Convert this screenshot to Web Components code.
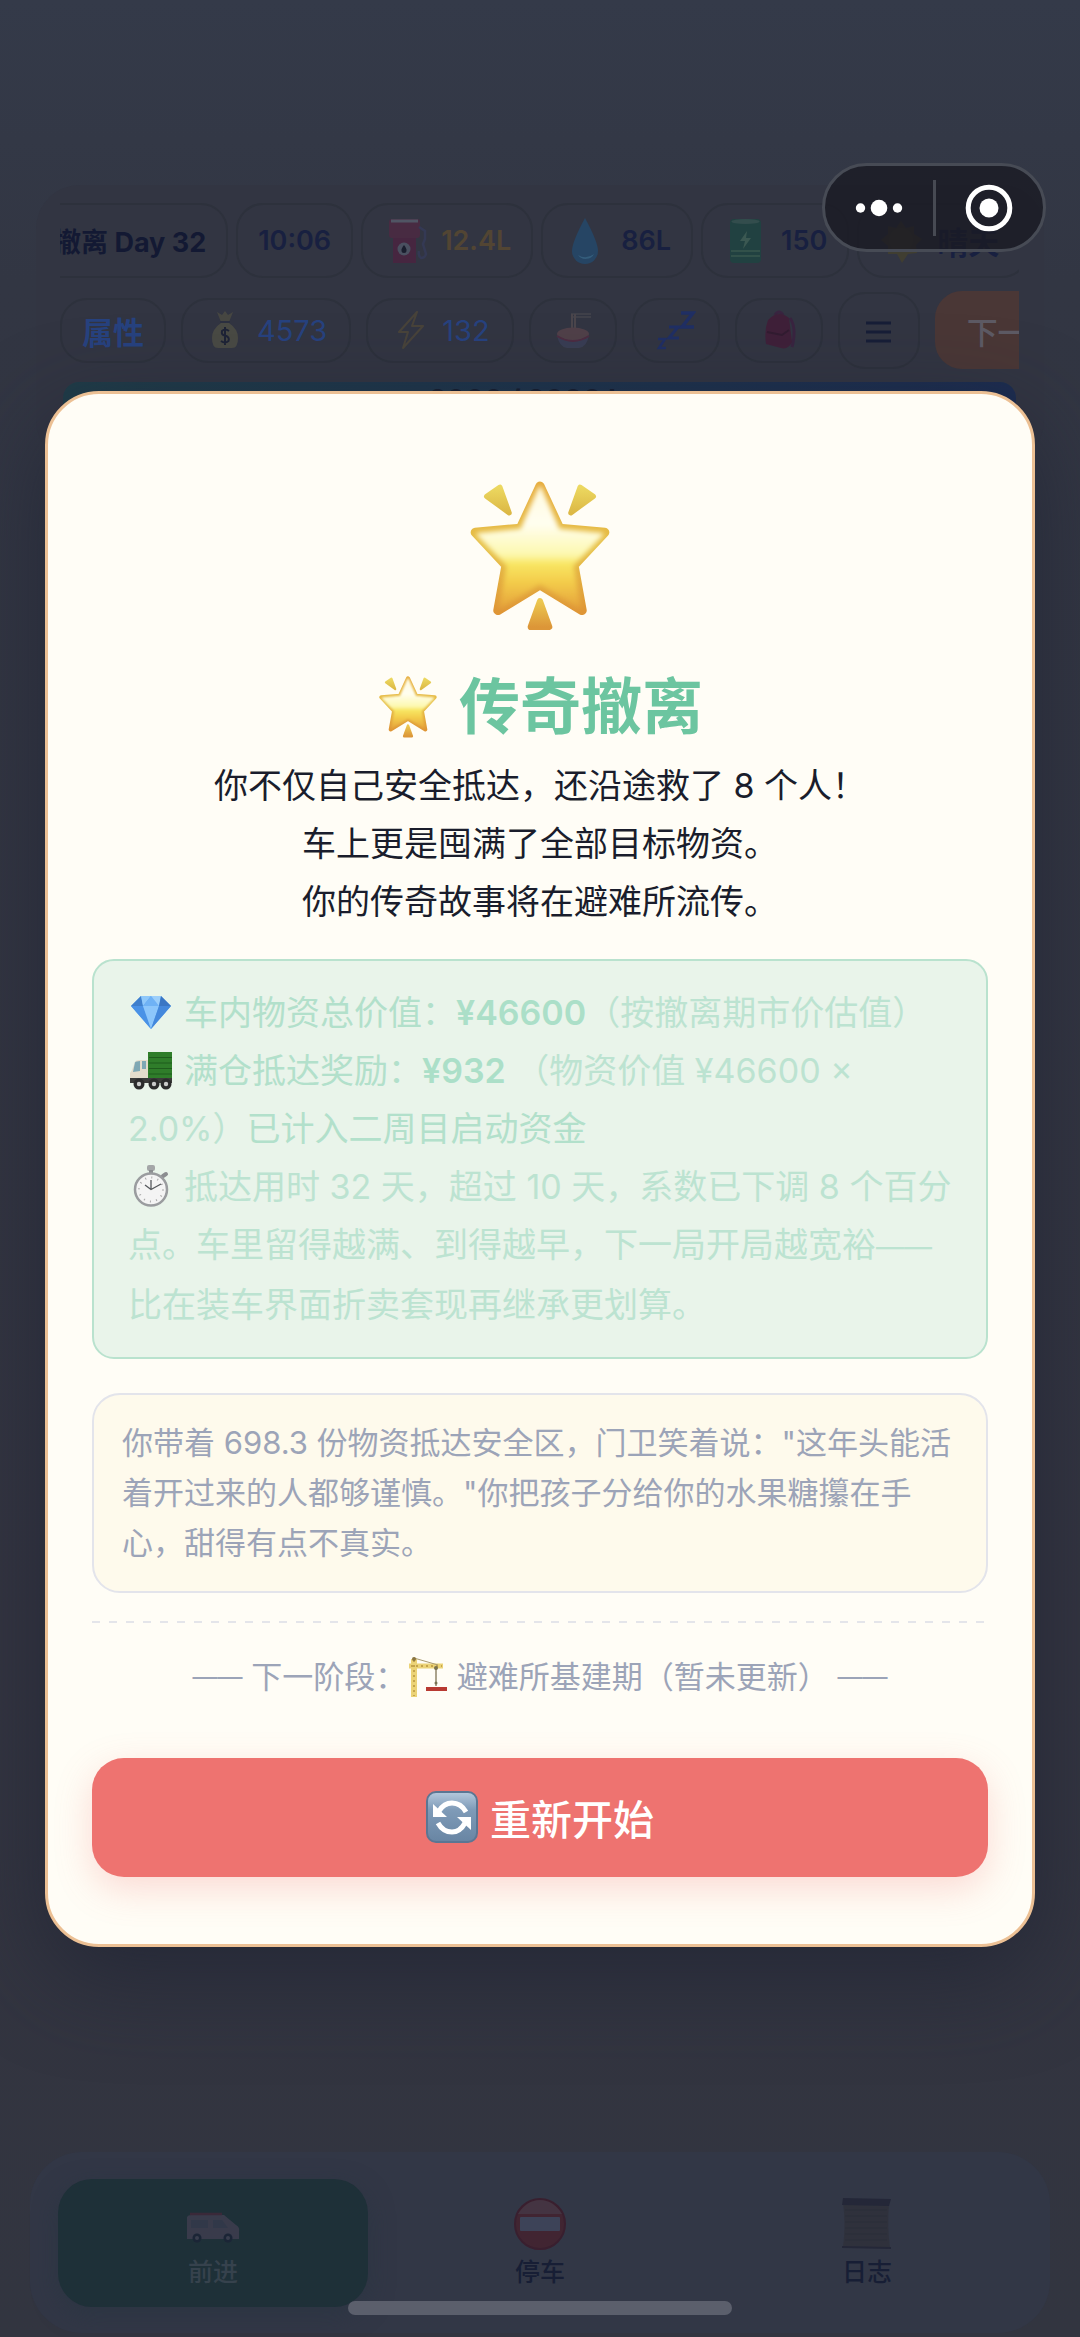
<!DOCTYPE html>
<html lang="zh-CN">
<head>
<meta charset="utf-8">
<meta name="viewport" content="width=device-width, initial-scale=1">
<title>传奇撤离</title>
<style>
  body {
    margin: 0;
    background: #323644;
    font-family: Inter, "Noto Sans CJK SC", sans-serif;
  }
</style>
</head>
<body>
<game-app></game-app>

<script>
const ICONS = {
  star: `<svg viewBox="1 3 138 146">
    <defs>
      <linearGradient id="s" x1="0" y1="0" x2="0" y2="1">
        <stop offset="0" stop-color="#fffbe0"/><stop offset=".3" stop-color="#fffef0"/>
        <stop offset=".56" stop-color="#fdf8b0"/><stop offset=".64" stop-color="#f8e662"/>
        <stop offset=".8" stop-color="#f3cb4a"/><stop offset="1" stop-color="#e6a63c"/>
      </linearGradient>
      <linearGradient id="e" x1="0" y1="0" x2="0" y2="1">
        <stop offset="0" stop-color="#e6ac3c"/><stop offset=".5" stop-color="#e6c148"/><stop offset="1" stop-color="#df9636"/>
      </linearGradient>
      <linearGradient id="r" x1="0" y1="0" x2="0" y2="1">
        <stop offset="0" stop-color="#ecd860"/><stop offset="1" stop-color="#dcb845"/>
      </linearGradient>
      <linearGradient id="b" x1="0" y1="0" x2="0" y2="1">
        <stop offset="0" stop-color="#ecc850"/><stop offset="1" stop-color="#dc9638"/>
      </linearGradient>
      <filter id="f" x="-10%" y="-10%" width="120%" height="120%"><feGaussianBlur stdDeviation="2.500"/></filter>
    </defs>
    <path d="M70 8L89 49L133 53L103 85L111 129L70 104L29 129L37 85L7 53L51 49Z" fill="url(#e)" stroke="url(#e)" stroke-width="9" stroke-linejoin="round"/>
    <path d="M70 10L88 51L130 55L101 85L108 125L70 102L32 125L39 85L10 55L52 51Z" fill="url(#s)" stroke="url(#s)" stroke-width="3" stroke-linejoin="round" filter="url(#f)"/>
    <path d="M18 18L31 9L40 34Z" fill="url(#r)" stroke="url(#r)" stroke-width="5" stroke-linejoin="round"/>
    <path d="M122 18L109 9L100 34Z" fill="url(#r)" stroke="url(#r)" stroke-width="5" stroke-linejoin="round"/>
    <path d="M70 120L79 145L61 145Z" fill="url(#b)" stroke="url(#b)" stroke-width="6" stroke-linejoin="round"/>
  </svg>`,
  gem: `<svg viewBox="0 0 42 42">
    <path d="M1 15L11 5H31L41 15L21 38Z" fill="#5aa2ee"/>
    <path d="M11 5L1 15H13Z" fill="#3f7fcc"/><path d="M11 5L13 15L21 5Z" fill="#8fc8fa"/>
    <path d="M21 5L13 15H29Z" fill="#6fb2f5"/><path d="M31 5L29 15L21 5Z" fill="#9ccffb"/>
    <path d="M31 5L41 15H29Z" fill="#3a76c4"/>
    <path d="M1 15H13L21 38Z" fill="#4a92e6"/><path d="M13 15H29L21 38Z" fill="#8cc6fb"/><path d="M29 15H41L21 38Z" fill="#4488dc"/>
  </svg>`,
  truck: `<svg viewBox="0 0 42 42">
    <path d="M18 3H42V31H18Z" fill="#2f7d2a"/>
    <path d="M19 8.500H42M19 14H42M19 19.500H42M19 25H42" stroke="#1f5c1d" stroke-width="1.200"/>
    <path d="M5 13Q6 11 9 11H18V33H0V24L2 21Z" fill="#e4dccb"/>
    <path d="M5 13.500Q6 12 10 12V22L3 23Z" fill="#7fa8b4"/><path d="M12 12H16V20H12Z" fill="#7fa8b4"/>
    <path d="M0 29H42V34H0Z" fill="#3b3b3a"/>
    <g fill="#2b2b2c" stroke="none"><circle cx="9" cy="35" r="5.500"/><circle cx="24" cy="35" r="5.500"/><circle cx="36" cy="35" r="5.500"/></g>
    <g fill="#c9c9c9"><circle cx="9" cy="35" r="2.200"/><circle cx="24" cy="35" r="2.200"/><circle cx="36" cy="35" r="2.200"/></g>
  </svg>`,
  watch: `<svg viewBox="0 0 42 42">
    <rect x="17" y="0" width="8" height="6" rx="2" fill="#a4a6a8"/><rect x="19" y="5" width="4" height="4" fill="#8b8d90"/>
    <path d="M33 11L36 9" stroke="#8b8d90" stroke-width="4" stroke-linecap="round"/>
    <circle cx="21" cy="24.500" r="16" fill="#f4f4f4" stroke="#9a9c9f" stroke-width="2.500"/>
    <circle cx="21" cy="24.500" r="12" fill="none" stroke="#a8a8a8" stroke-width="2" stroke-dasharray="1 5.280"/>
    <path d="M15 20L21 24.500L31 19M21 24.500V15" fill="none" stroke="#55585c" stroke-width="1.300"/>
  </svg>`,
  crane: `<svg viewBox="0 0 42 42">
    <path d="M8 3V41" stroke="#ecd377" stroke-width="6"/><path d="M3 10H37" stroke="#ecd377" stroke-width="5"/>
    <path d="M8 4V40" stroke="#b8963f" stroke-width="1.500" stroke-dasharray="2 3"/>
    <path d="M5 10H36" stroke="#b8963f" stroke-width="1.500" stroke-dasharray="2 3"/>
    <path d="M8 2L32 9" stroke="#a99a70" stroke-width="1"/><circle cx="8" cy="3" r="2" fill="#8a7440"/>
    <path d="M30 12V30" stroke="#8f8468" stroke-width="1.500"/><circle cx="30" cy="12" r="2" fill="#77704f"/><circle cx="30" cy="27" r="1.500" fill="#77704f"/>
    <path d="M20 31H41V35H20Z" fill="#b83a32"/>
  </svg>`,
  reload: `<svg viewBox="0 0 52 52">
    <defs><linearGradient id="k" x1="0" y1="0" x2="0" y2="1">
      <stop offset="0" stop-color="#b5c9dd"/><stop offset=".35" stop-color="#7f9bb8"/><stop offset="1" stop-color="#6885a3"/>
    </linearGradient></defs>
    <rect x="1" y="1" width="50" height="50" rx="9" fill="url(#k)" stroke="#5b7693" stroke-width="2"/>
    <path d="M13 20Q18 12 26 12Q35 12 40 21" fill="none" stroke="#fff" stroke-width="5"/>
    <path d="M39 32Q34 41 26 41Q17 41 12 32" fill="none" stroke="#fff" stroke-width="5"/>
    <path d="M7 13V26H21Z" fill="#fff"/><path d="M45 39V26H31Z" fill="#fff"/>
  </svg>`,
  fuel: `<svg viewBox="0 0 46 46">
    <rect x="6" y="1" width="31" height="19" rx="3" fill="#4c2a42"/><path d="M8 3H35" stroke="#565b6b" stroke-width="3"/>
    <path d="M10 20H33V45H10Z" fill="#4a2440"/><circle cx="21" cy="31" r="6.500" fill="#4f5566"/>
    <path d="M21 27Q24 31 23.500 32.500A2.500 2.500 0 0 1 18.500 32.500Q18 31 21 27Z" fill="#161b2b"/>
    <path d="M36 9L42 13V21L40 26L43 36Q42 40 38 40Q35 38 36 33" fill="none" stroke="#353a58" stroke-width="2.500"/>
  </svg>`,
  drop: `<svg viewBox="0 0 46 46"><path d="M22 0Q35 24 35 33A13 13 0 0 1 9 33Q9 24 22 0Z" fill="#24486a"/>
    <path d="M15 37A9 8 0 0 0 31 36Q23 42 15 37Z" fill="#356486"/></svg>`,
  battery: `<svg viewBox="0 0 46 46"><rect x="7" y="1" width="31" height="44" rx="4" fill="#1f4441"/>
    <ellipse cx="22.500" cy="3.500" rx="14" ry="2.500" fill="#345250"/>
    <path d="M8 33H37M8 38H37" stroke="#3b5c50" stroke-width="1.500"/><path d="M24 13L17 23H22L20 31L28 20H23Z" fill="#3d5f55"/></svg>`,
  sun: `<svg viewBox="0 0 46 46"><path d="M22 3L27 10L35 8L35 16L43 21L37 27L38 35L29 36L23 45L18 36L9 36L9 28L2 22L9 16L9 8L17 10Z" fill="#43402f"/><circle cx="22" cy="22" r="12" fill="#4b4730"/></svg>`,
  money: `<svg viewBox="0 0 40 40"><path d="M12 2L17 5L20 1L23 5L28 2L24 12H16Z" fill="#4b4b43"/>
    <path d="M16 13H24Q33 19 33 28Q33 38 27 38H13Q7 38 7 28Q7 19 16 13Z" fill="#4e4e45"/><path d="M15 12H25" stroke="#2b3040" stroke-width="2"/>
    <path d="M24 21Q20 18 17 21Q16 25 20 25.500Q25 27 23.500 31Q20 34 16 31M20 17V35" fill="none" stroke="#1b2135" stroke-width="2"/></svg>`,
  bolt: `<svg viewBox="0 0 40 40"><path d="M27 2L9 22H18L13 38L33 16H22Z" fill="none" stroke="#4d4639" stroke-width="2" stroke-linejoin="round"/></svg>`,
  noodles: `<svg viewBox="0 0 40 40"><path d="M18 4H38M18 7H38" stroke="#4a4850" stroke-width="1.500"/><path d="M19 4V20M22 4V20" stroke="#504a4e" stroke-width="2"/>
    <ellipse cx="20" cy="24" rx="16" ry="6.500" fill="#56434b"/><path d="M4 25Q20 36 36 25Q34 37 26 38H14Q6 37 4 25Z" fill="#3b3f56"/><path d="M4 26Q20 36 36 26" fill="none" stroke="#522b42" stroke-width="2"/></svg>`,
  sleep: `<svg viewBox="0 0 40 40"><g fill="none" stroke="#1d2e6a"><path d="M25 3H37L26 17H38" stroke-width="3.500"/><path d="M13 17H22L13 28H23" stroke-width="3"/><path d="M2 29H9L3 38H10" stroke-width="2.500"/></g></svg>`,
  bag: `<svg viewBox="0 0 40 40"><path d="M16 5Q20 -1 24 5" fill="none" stroke="#3b2240" stroke-width="3"/>
    <path d="M31 8Q38 18 33 37" fill="none" stroke="#3b2240" stroke-width="3"/>
    <path d="M9 10Q19 -1 30 8L33 32Q29 40 22 38L7 34Q5 20 9 10Z" fill="#421d38"/><path d="M8 22L23 25L30 20" fill="none" stroke="#32182f" stroke-width="2"/></svg>`,
  menu: `<svg viewBox="0 0 40 40"><path d="M7 13H32M7 22H32M7 31H32" stroke="#131a36" stroke-width="3"/></svg>`,
  van: `<svg viewBox="0 0 54 54"><path d="M1 21Q2 19 5 19H38L50 29Q54 31 53 36V43H1Z" fill="#3e3e4f"/>
    <path d="M4 18H36" stroke="#40283a" stroke-width="2.500"/><path d="M5 24H22V32H5ZM27 24H36L42 32H27Z" fill="#353a4d"/>
    <circle cx="11" cy="42" r="4.500" fill="#1b2436"/><circle cx="42" cy="42" r="4.500" fill="#1b2436"/><circle cx="11" cy="42" r="2" fill="#3e4152"/><circle cx="42" cy="42" r="2" fill="#3e4152"/></svg>`,
  stop: `<svg viewBox="0 0 54 54"><circle cx="27" cy="28" r="25" fill="#44232f" stroke="#3b1b2b" stroke-width="2"/><path d="M5 18Q14 4 27 4Q40 4 49 18Z" fill="#483442"/>
    <rect x="7" y="21" width="40" height="14" rx="1" fill="#3f465c"/></svg>`,
  scroll: `<svg viewBox="0 0 54 54"><path d="M3 6L49 8Q47 30 50 52L3 51Q6 30 3 6Z" fill="#2f313b"/>
    <path d="M5 14H47M5 20H47M5 26H47M5 32H47M5 38H47M5 44H47" stroke="#2a2d37" stroke-width="1"/>
    <path d="M3 2L51 3L49 10L2 9Z" fill="#222536"/><path d="M2 51L51 52" stroke="#222536" stroke-width="2"/></svg>`,
};

class GameIcon extends HTMLElement {
  connectedCallback() {
    const shadow = this.attachShadow({ mode: 'open' });
    shadow.innerHTML = `
      <style>
        :host {
          display: inline-block; flex: none; width: var(--icon, 40px); height: var(--icon, 40px);
          opacity: var(--icon-opacity, 1); white-space: normal;
        }
        svg { display: block; width: 100%; height: 100%; }
      </style>
      ${ICONS[this.getAttribute('name')]}`;
  }
}
customElements.define('game-icon', GameIcon);

class StatChip extends HTMLElement {
  connectedCallback() {
    const shadow = this.attachShadow({ mode: 'open' });
    shadow.innerHTML = `
      <style>
        :host {
          display: flex; align-items: center; gap: 12px; flex: none;
          box-sizing: border-box; height: 75px; padding: 0 20px;
          border: 2px solid #2d313c; border-radius: 27px;
          color: #182040; font-size: 27px; font-weight: 600; white-space: nowrap;
          --icon: 46px;
        }
        :host([strong]) { color: #131933; font-weight: 700; }
        :host([warn]) { color: #524533; }
        :host([large]) { padding: 0 28px 0 20px; font-size: 31px; }
      </style>
      <slot></slot>`;
  }
}
customElements.define('stat-chip', StatChip);

class ActionChip extends HTMLElement {
  connectedCallback() {
    const shadow = this.attachShadow({ mode: 'open' });
    shadow.innerHTML = `
      <style>
        :host { display: block; flex: none; }
        button {
          display: flex; align-items: center; gap: 12px;
          box-sizing: border-box; height: 65px; padding: 0 22px;
          border: 2px solid #2d313c; border-radius: 27px; background: none;
          color: #27427f; font: inherit; font-size: 29px; white-space: nowrap;
        }
        :host([bold]) button { padding: 0 20px; font-size: 31px; font-weight: 700; }
        :host([tall]) button { height: 77px; padding: 0 19px; }
        :host([primary]) button {
          height: 78px; padding: 0 32px; border: 0;
          background: #4a3736; color: #5d5a64; font-size: 31px; font-weight: 500;
        }
      </style>
      <button type="button" aria-label="${this.getAttribute('label') || ''}"><slot></slot></button>`;
    if (!this.hasAttribute('label')) shadow.querySelector('button').removeAttribute('aria-label');
  }
}
customElements.define('action-chip', ActionChip);

class ChipStrip extends HTMLElement {
  connectedCallback() {
    const shadow = this.attachShadow({ mode: 'open' });
    shadow.innerHTML = `
      <style>
        :host { display: block; min-width: 0; }
        div { display: flex; align-items: center; gap: var(--gap, 8px); overflow-x: auto; scrollbar-width: none; }
      </style>
      <div><slot></slot></div>`;
  }

  restore() {
    this.shadowRoot.querySelector('div').scrollLeft = Number(this.getAttribute('scrolled') || 0);
  }
}
customElements.define('chip-strip', ChipStrip);

class StatusPanel extends HTMLElement {
  connectedCallback() {
    const shadow = this.attachShadow({ mode: 'open' });
    shadow.innerHTML = `
      <style>
        :host {
          display: grid; gap: 13px; margin: 185px 36px 0; padding: 18px 25px 24px 24px;
          border-radius: 44px; background: #323542; --icon-opacity: .85;
        }
        .actions { --gap: 15px; }
        .progress {
          margin: 0 3px; height: 58px; border-radius: 16px; overflow: hidden;
          background: linear-gradient(90deg, #1f3c48, #1c2c50);
          color: #151c2e; font-size: 28px; font-weight: 700; line-height: 36px; text-align: center;
        }
      </style>
      <chip-strip scrolled="28">
        <stat-chip strong>撤离 Day 32</stat-chip>
        <stat-chip>10:06</stat-chip>
        <stat-chip warn><game-icon name="fuel"></game-icon>12.4L</stat-chip>
        <stat-chip><game-icon name="drop"></game-icon>86L</stat-chip>
        <stat-chip><game-icon name="battery"></game-icon>150</stat-chip>
        <stat-chip large><game-icon name="sun"></game-icon>晴天</stat-chip>
      </chip-strip>
      <chip-strip class="actions">
        <action-chip bold>属性</action-chip>
        <action-chip><game-icon name="money"></game-icon>4573</action-chip>
        <action-chip><game-icon name="bolt"></game-icon>132</action-chip>
        <action-chip label="吃饭"><game-icon name="noodles"></game-icon></action-chip>
        <action-chip label="睡觉"><game-icon name="sleep"></game-icon></action-chip>
        <action-chip label="背包"><game-icon name="bag"></game-icon></action-chip>
        <action-chip tall label="菜单"><game-icon name="menu"></game-icon></action-chip>
        <action-chip primary>下一步</action-chip>
      </chip-strip>
      <div class="progress">2000 / 2000 km</div>`;
    shadow.querySelector('chip-strip').restore();
  }
}
customElements.define('status-panel', StatusPanel);

class NavTab extends HTMLElement {
  connectedCallback() {
    const shadow = this.attachShadow({ mode: 'open' });
    shadow.innerHTML = `
      <style>
        :host { display: block; --icon: 54px; --icon-opacity: .85; }
        button {
          display: grid; justify-items: center; align-content: center; gap: 4px;
          box-sizing: border-box; width: 100%; height: 128px; padding: 0;
          border: 0; border-radius: 34px; background: none;
          color: #171e35; font: inherit; font-size: 25px; font-weight: 500; line-height: 36px;
        }
        :host([active]) button { background: #1e3038; color: #36424d; box-shadow: 0 8px 24px #26343f80; }
      </style>
      <button type="button"><game-icon name="${this.getAttribute('icon')}"></game-icon><slot></slot></button>`;
  }
}
customElements.define('nav-tab', NavTab);

class BottomNav extends HTMLElement {
  connectedCallback() {
    const shadow = this.attachShadow({ mode: 'open' });
    shadow.innerHTML = `
      <style>
        :host {
          display: grid; grid-template-columns: repeat(3, 1fr); gap: 17px;
          margin: 0 30px 4px; padding: 27px 28px 26px; border-radius: 52px; background: #323746;
        }
      </style>
      <slot></slot>`;
  }
}
customElements.define('bottom-nav', BottomNav);

class MiniCapsule extends HTMLElement {
  connectedCallback() {
    const shadow = this.attachShadow({ mode: 'open' });
    shadow.innerHTML = `
      <style>
        :host {
          display: grid; grid-template-columns: 1fr 3px 1fr; align-items: center;
          box-sizing: border-box; width: 224px; height: 89px;
          border: 3px solid #474b55; border-radius: 45px; background: #191a22c8;
        }
        button { display: grid; place-items: center; padding: 0; border: 0; background: none; }
        svg { display: block; fill: #fff; }
        i { height: 56px; background: #474a53; }
      </style>
      <button type="button" aria-label="更多"><svg width="48" height="48"><circle cx="5.500" cy="24" r="4.700"/><circle cx="24" cy="24" r="8.300"/><circle cx="42.500" cy="24" r="4.700"/></svg></button>
      <i></i>
      <button type="button" aria-label="关闭"><svg width="48" height="48"><circle cx="24" cy="24" r="20.800" fill="none" stroke="#fff" stroke-width="5"/><circle cx="24" cy="24" r="9.500"/></svg></button>`;
  }
}
customElements.define('mini-capsule', MiniCapsule);

class InfoBox extends HTMLElement {
  connectedCallback() {
    const shadow = this.attachShadow({ mode: 'open' });
    shadow.innerHTML = `
      <style>
        :host { display: block; box-sizing: border-box; }
        :host([kind="reward"]) {
          padding: 23px 30px 23px 34px; border: 2px solid #b9e2ce; border-radius: 22px;
          background: #e9f4ea; color: #bce3d1; font-size: 34px; line-height: 58px;
        }
        :host([kind="story"]) {
          padding: 23px 28px; border: 2px solid #e3e4eb; border-radius: 28px;
          background: #fefaec; color: #9ca4b8; font-size: 31px; line-height: 50px;
        }
      </style>
      <slot></slot>`;
  }
}
customElements.define('info-box', InfoBox);

class EndingDialog extends HTMLElement {
  connectedCallback() {
    const shadow = this.attachShadow({ mode: 'open' });
    shadow.innerHTML = `
      <style>
        :host {
          display: flex; flex-direction: column; box-sizing: border-box;
          margin: 0 45px; padding: 87px 44px 67px;
          border: 3px solid #ecc094; border-radius: 54px;
          background: #fffdf6; box-shadow: 0 30px 90px #1f2333b3; color: #1a1d2c;
        }
        .hero { --icon: 150px; align-self: center; }
        h1 {
          display: flex; align-items: center; justify-content: center; gap: 20px;
          margin: 32px 0 6px; color: #6cc5a0; font-size: 61px; font-weight: 700; line-height: 88px;
          --icon: 62px;
        }
        p { margin: 0; }
        .lead { margin-bottom: 28px; font-size: 34px; line-height: 58px; text-align: center; }
        info-box + info-box { margin-top: 34px; }
        .line { display: block; white-space: nowrap; }
        .reward { --icon: 42px; }
        .reward game-icon { margin: 0 12px 0 2px; vertical-align: -8px; }
        .reward b { font-weight: 600; color: #abdfc8; }
        .strong { color: #b2e0cb; }
        .reward .dash { font-size: 28px; }
        .next .dash { font-size: 25px; }
        hr {
          width: 100%; height: 2px; margin: 28px 0 29px; border: 0;
          background: repeating-linear-gradient(90deg, #e4e5ea 0 8px, transparent 8px 17px);
        }
        .next {
          display: flex; align-items: center; justify-content: center; white-space: pre;
          color: #9ca4b8; font-size: 31px; line-height: 50px; --icon: 42px;
        }
        button {
          display: flex; align-items: center; justify-content: center; gap: 12px;
          height: 119px; margin-top: 56px; padding: 0; border: 0; border-radius: 32px;
          background: #ee7370; box-shadow: 0 12px 36px #ee737040;
          color: #fff; font: inherit; font-size: 41px; font-weight: 500; --icon: 52px;
        }
      </style>
      <game-icon class="hero" name="star"></game-icon>
      <h1><game-icon name="star"></game-icon><span>传奇撤离</span></h1>
      <p class="lead">你不仅自己安全抵达，还沿途救了 8 个人！<br>车上更是囤满了全部目标物资。<br>你的传奇故事将在避难所流传。</p>
      <info-box kind="reward" class="reward">
        <span class="line"><game-icon name="gem"></game-icon><span class="strong">车内物资总价值：</span><b>¥46600</b>（按撤离期市价估值）</span>
        <span class="line"><game-icon name="truck"></game-icon><span class="strong">满仓抵达奖励：</span><b>¥932</b> （物资价值 ¥46600 ×</span>
        <span class="line">2.0%）<span class="strong">已计入二周目启动资金</span></span>
        <span class="line"><game-icon name="watch"></game-icon>抵达用时 32 天，超过 10 天，系数已下调 8 个百分</span>
        <span class="line">点。车里留得越满、到得越早，下一局开局越宽裕<span class="dash">——</span></span>
        <span class="line">比在装车界面折卖套现再继承更划算。</span>
      </info-box>
      <info-box kind="story">
        <span class="line">你带着 698.3 份物资抵达安全区，门卫笑着说："这年头能活</span>
        <span class="line">着开过来的人都够谨慎。"你把孩子分给你的水果糖攥在手</span>
        <span class="line">心，甜得有点不真实。</span>
      </info-box>
      <hr>
      <p class="next"><span class="dash">——</span> 下一阶段：<game-icon name="crane"></game-icon> 避难所基建期（暂未更新） <span class="dash">——</span></p>
      <button type="button"><game-icon name="reload"></game-icon>重新开始</button>`;
  }
}
customElements.define('ending-dialog', EndingDialog);

class GameApp extends HTMLElement {
  connectedCallback() {
    const shadow = this.attachShadow({ mode: 'open' });
    shadow.innerHTML = `
      <style>
        :host {
          display: grid; grid-template-columns: minmax(0, 1fr); position: relative; min-height: 100vh;
          background: linear-gradient(#343a49, #323643 12%, #333440 70%, #323540);
        }
        .screen, .overlay { grid-area: 1 / 1; }
        .screen { display: flex; flex-direction: column; justify-content: space-between; }
        .overlay { display: grid; align-content: center; z-index: 1; }
        mini-capsule { position: absolute; top: 163px; right: 34px; z-index: 2; }
        .home {
          position: absolute; bottom: 22px; left: 50%; width: 384px; height: 14px; z-index: 2;
          transform: translateX(-50%); border-radius: 7px; background: #5b5f6c;
        }
      </style>
      <div class="screen">
        <status-panel></status-panel>
        <bottom-nav>
          <nav-tab active icon="van">前进</nav-tab>
          <nav-tab icon="stop">停车</nav-tab>
          <nav-tab icon="scroll">日志</nav-tab>
        </bottom-nav>
      </div>
      <div class="overlay"><ending-dialog role="dialog" aria-label="传奇撤离"></ending-dialog></div>
      <mini-capsule></mini-capsule>
      <div class="home"></div>`;
  }
}
customElements.define('game-app', GameApp);
</script>
</body>
</html>
